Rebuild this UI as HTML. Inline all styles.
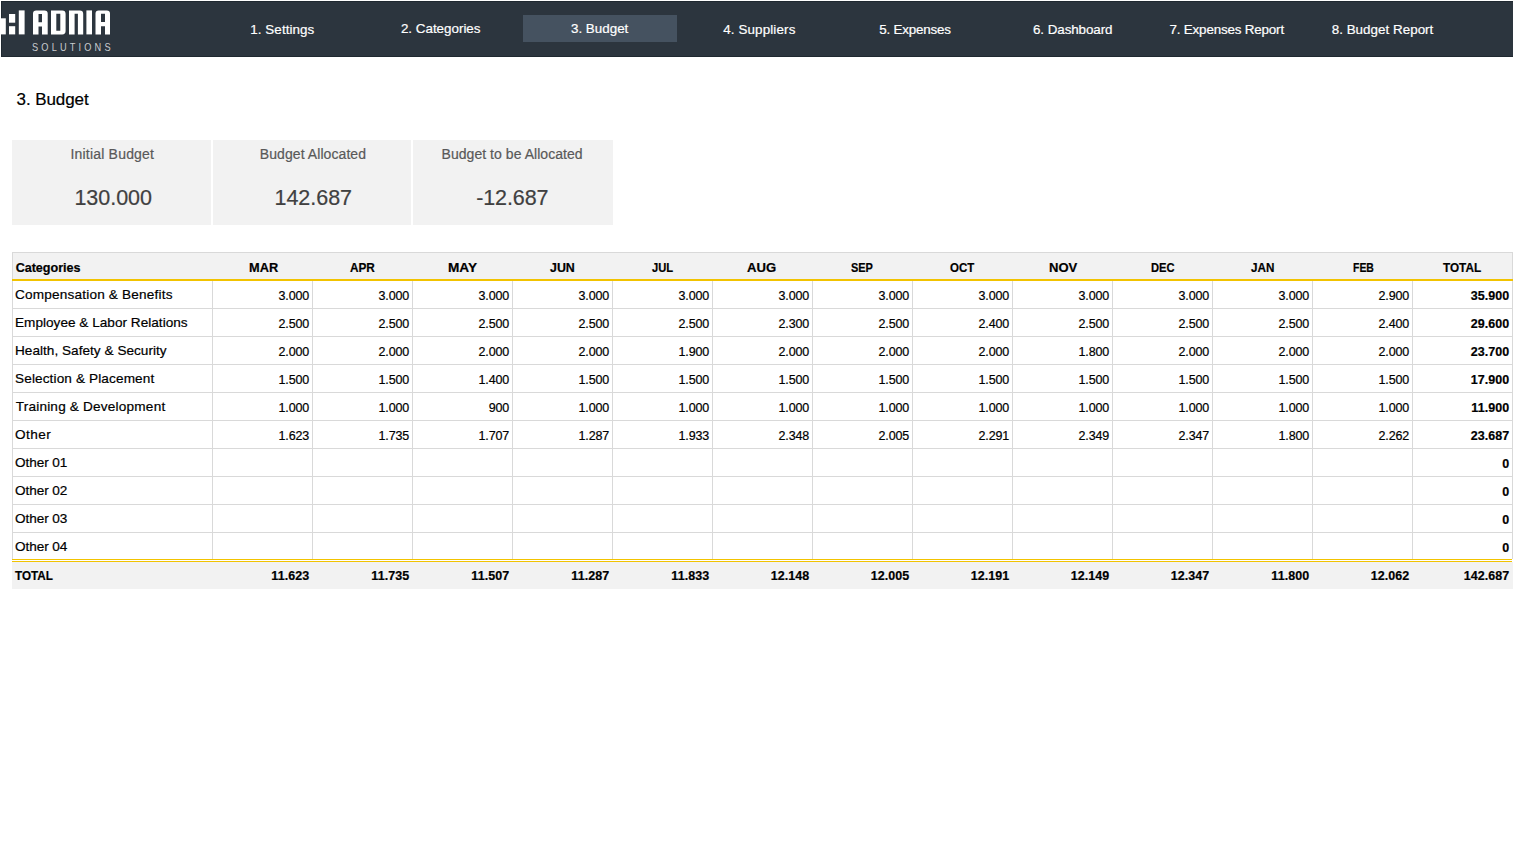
<!DOCTYPE html>
<html><head><meta charset="utf-8"><title>3. Budget</title>
<style>
html,body{margin:0;padding:0;background:#fff;}
body{width:1513px;height:841px;position:relative;overflow:hidden;font-family:"Liberation Sans",sans-serif;}
.r{position:absolute;}
.t{position:absolute;white-space:pre;line-height:1;-webkit-text-stroke:0.2px currentColor;}
</style></head><body>
<div class="r" style="left:1px;top:1px;width:1512px;height:56px;background:#2C353E;"></div>
<div class="r" style="left:1px;top:1px;width:1512px;height:1px;background:#1F2830;"></div>
<div class="r" style="left:1px;top:56px;width:1512px;height:1px;background:#1F2830;"></div>
<div class="r" style="left:1px;top:1px;width:1px;height:56px;background:#1F2830;"></div>
<div class="r" style="left:523px;top:15px;width:154px;height:27px;background:#455260;"></div>
<svg class="r" style="left:0;top:0" width="120" height="57" viewBox="0 0 120 57"><g fill="#fff">
<rect x="1" y="18.3" width="4.8" height="16.1"/>
<rect x="9" y="14" width="6.2" height="8.7"/>
<rect x="9" y="26.2" width="6.2" height="8.2"/>
<rect x="18.8" y="10.4" width="5.8" height="24"/>
<path d="M33 34.4V13.6Q33 10.4 36.2 10.4H44.5Q47.7 10.4 47.7 13.6V34.4H42V26.5H38.5V34.4Z M38.5 14V22.3H42V14Z" fill-rule="evenodd"/>
<path d="M51 10.4H62.2Q65.6 10.4 65.6 13.8V31Q65.6 34.4 62.2 34.4H51Z M56.3 13.8V30.7H60.3V13.8Z" fill-rule="evenodd"/>
<path d="M69 34.4V10.4H79.8Q83.2 10.4 83.2 13.8V34.4H77.9V13.8H74.6V34.4Z"/>
<rect x="86.4" y="10.4" width="5.6" height="24"/>
<path d="M95.5 34.4V13.6Q95.5 10.4 98.7 10.4H106.8Q110 10.4 110 13.6V34.4H105V26.3H101V34.4Z M101 13.8V22.1H105V13.8Z" fill-rule="evenodd"/>
</g></svg>
<div class="r" style="left:12px;top:140px;width:199px;height:85px;background:#F2F2F2;"></div>
<div class="r" style="left:213px;top:140px;width:198px;height:85px;background:#F2F2F2;"></div>
<div class="r" style="left:413px;top:140px;width:200px;height:85px;background:#F2F2F2;"></div>
<div class="r" style="left:12px;top:252px;width:1501px;height:1px;background:#D9D9D9;"></div>
<div class="r" style="left:13px;top:253px;width:1499px;height:26px;background:#F2F2F2;"></div>
<div class="r" style="left:12px;top:252px;width:1px;height:307px;background:#D9D9D9;"></div>
<div class="r" style="left:1512px;top:252px;width:1px;height:307px;background:#D9D9D9;"></div>
<div class="r" style="left:212px;top:281px;width:1px;height:278px;background:#D9D9D9;"></div>
<div class="r" style="left:312px;top:281px;width:1px;height:278px;background:#D9D9D9;"></div>
<div class="r" style="left:412px;top:281px;width:1px;height:278px;background:#D9D9D9;"></div>
<div class="r" style="left:512px;top:281px;width:1px;height:278px;background:#D9D9D9;"></div>
<div class="r" style="left:612px;top:281px;width:1px;height:278px;background:#D9D9D9;"></div>
<div class="r" style="left:712px;top:281px;width:1px;height:278px;background:#D9D9D9;"></div>
<div class="r" style="left:812px;top:281px;width:1px;height:278px;background:#D9D9D9;"></div>
<div class="r" style="left:912px;top:281px;width:1px;height:278px;background:#D9D9D9;"></div>
<div class="r" style="left:1012px;top:281px;width:1px;height:278px;background:#D9D9D9;"></div>
<div class="r" style="left:1112px;top:281px;width:1px;height:278px;background:#D9D9D9;"></div>
<div class="r" style="left:1212px;top:281px;width:1px;height:278px;background:#D9D9D9;"></div>
<div class="r" style="left:1312px;top:281px;width:1px;height:278px;background:#D9D9D9;"></div>
<div class="r" style="left:1412px;top:281px;width:1px;height:278px;background:#D9D9D9;"></div>
<div class="r" style="left:12px;top:308px;width:1501px;height:1px;background:#D9D9D9;"></div>
<div class="r" style="left:12px;top:336px;width:1501px;height:1px;background:#D9D9D9;"></div>
<div class="r" style="left:12px;top:364px;width:1501px;height:1px;background:#D9D9D9;"></div>
<div class="r" style="left:12px;top:392px;width:1501px;height:1px;background:#D9D9D9;"></div>
<div class="r" style="left:12px;top:420px;width:1501px;height:1px;background:#D9D9D9;"></div>
<div class="r" style="left:12px;top:448px;width:1501px;height:1px;background:#D9D9D9;"></div>
<div class="r" style="left:12px;top:476px;width:1501px;height:1px;background:#D9D9D9;"></div>
<div class="r" style="left:12px;top:504px;width:1501px;height:1px;background:#D9D9D9;"></div>
<div class="r" style="left:12px;top:532px;width:1501px;height:1px;background:#D9D9D9;"></div>
<div class="r" style="left:12px;top:279px;width:1501px;height:2px;background:#F2C300;"></div>
<div class="r" style="left:12px;top:559px;width:1500px;height:1px;background:#F2C300;"></div>
<div class="r" style="left:12px;top:561px;width:1500px;height:1px;background:#F2C300;"></div>
<div class="r" style="left:12px;top:562px;width:1501px;height:27px;background:#F2F2F2;"></div>
<div class="t" style="left:250.24px;top:22.66px;font-size:13.4px;color:#fff;font-weight:400;letter-spacing:0.077px;">1. Settings</div>
<div class="t" style="left:400.93px;top:21.66px;font-size:13.4px;color:#fff;font-weight:400;letter-spacing:-0.007px;">2. Categories</div>
<div class="t" style="left:570.93px;top:21.66px;font-size:13.4px;color:#fff;font-weight:400;letter-spacing:0.011px;">3. Budget</div>
<div class="t" style="left:723.17px;top:22.66px;font-size:13.4px;color:#fff;font-weight:400;letter-spacing:0.135px;">4. Suppliers</div>
<div class="t" style="left:879.32px;top:22.66px;font-size:13.4px;color:#fff;font-weight:400;letter-spacing:-0.210px;">5. Expenses</div>
<div class="t" style="left:1033.01px;top:22.66px;font-size:13.4px;color:#fff;font-weight:400;letter-spacing:-0.075px;">6. Dashboard</div>
<div class="t" style="left:1169.47px;top:22.66px;font-size:13.4px;color:#fff;font-weight:400;letter-spacing:-0.175px;">7. Expenses Report</div>
<div class="t" style="left:1331.70px;top:22.66px;font-size:13.4px;color:#fff;font-weight:400;letter-spacing:0.026px;">8. Budget Report</div>
<div class="t" style="left:31.78px;top:41.59px;font-size:11px;color:#C9CCCF;font-weight:400;letter-spacing:3.750px;transform:scaleX(0.84);transform-origin:0 0;-webkit-text-stroke:0;">SOLUTIONS</div>
<div class="t" style="left:16.55px;top:90.61px;font-size:17px;color:#000;font-weight:400;letter-spacing:-0.077px;">3. Budget</div>
<div class="t" style="left:70.46px;top:147.15px;font-size:14px;color:#595959;font-weight:400;letter-spacing:0.199px;">Initial Budget</div>
<div class="t" style="left:259.77px;top:147.15px;font-size:14px;color:#595959;font-weight:400;letter-spacing:0.077px;">Budget Allocated</div>
<div class="t" style="left:441.54px;top:147.15px;font-size:14px;color:#595959;font-weight:400;letter-spacing:0.047px;">Budget to be Allocated</div>
<div class="t" style="left:74.46px;top:187.50px;font-size:21.5px;color:#404040;font-weight:400;letter-spacing:-0.037px;">130.000</div>
<div class="t" style="left:274.54px;top:187.50px;font-size:21.5px;color:#404040;font-weight:400;letter-spacing:-0.038px;">142.687</div>
<div class="t" style="left:476.16px;top:187.50px;font-size:21.5px;color:#404040;font-weight:400;letter-spacing:-0.089px;">-12.687</div>
<div class="t" style="left:15.63px;top:262.33px;font-size:12.6px;color:#000;font-weight:700;letter-spacing:-0.024px;">Categories</div>
<div class="t" style="left:248.86px;top:262.33px;font-size:12.6px;color:#000;font-weight:700;transform:scaleX(1.0150);transform-origin:0 0;">MAR</div>
<div class="t" style="left:349.70px;top:262.33px;font-size:12.6px;color:#000;font-weight:700;transform:scaleX(0.9358);transform-origin:0 0;">APR</div>
<div class="t" style="left:448.32px;top:262.33px;font-size:12.6px;color:#000;font-weight:700;transform:scaleX(1.0833);transform-origin:0 0;">MAY</div>
<div class="t" style="left:550.32px;top:262.33px;font-size:12.6px;color:#000;font-weight:700;transform:scaleX(0.9854);transform-origin:0 0;">JUN</div>
<div class="t" style="left:651.78px;top:262.33px;font-size:12.6px;color:#000;font-weight:700;transform:scaleX(0.8882);transform-origin:0 0;">JUL</div>
<div class="t" style="left:747.47px;top:262.33px;font-size:12.6px;color:#000;font-weight:700;transform:scaleX(1.0412);transform-origin:0 0;">AUG</div>
<div class="t" style="left:851.47px;top:262.33px;font-size:12.6px;color:#000;font-weight:700;transform:scaleX(0.8700);transform-origin:0 0;">SEP</div>
<div class="t" style="left:950.32px;top:262.33px;font-size:12.6px;color:#000;font-weight:700;transform:scaleX(0.9118);transform-origin:0 0;">OCT</div>
<div class="t" style="left:1048.63px;top:262.33px;font-size:12.6px;color:#000;font-weight:700;transform:scaleX(1.0353);transform-origin:0 0;">NOV</div>
<div class="t" style="left:1151.24px;top:262.33px;font-size:12.6px;color:#000;font-weight:700;transform:scaleX(0.8853);transform-origin:0 0;">DEC</div>
<div class="t" style="left:1251.32px;top:262.33px;font-size:12.6px;color:#000;font-weight:700;transform:scaleX(0.9278);transform-origin:0 0;">JAN</div>
<div class="t" style="left:1352.86px;top:262.33px;font-size:12.6px;color:#000;font-weight:700;transform:scaleX(0.8291);transform-origin:0 0;">FEB</div>
<div class="t" style="left:1443.48px;top:262.33px;font-size:12.6px;color:#000;font-weight:700;transform:scaleX(0.9335);transform-origin:0 0;">TOTAL</div>
<div class="t" style="left:15.01px;top:288.49px;font-size:13.6px;color:#000;font-weight:400;letter-spacing:0.186px;">Compensation &amp; Benefits</div>
<div class="t" style="left:15.01px;top:316.49px;font-size:13.6px;color:#000;font-weight:400;letter-spacing:0.014px;">Employee &amp; Labor Relations</div>
<div class="t" style="left:15.01px;top:344.49px;font-size:13.6px;color:#000;font-weight:400;letter-spacing:0.022px;">Health, Safety &amp; Security</div>
<div class="t" style="left:15.01px;top:372.49px;font-size:13.6px;color:#000;font-weight:400;letter-spacing:0.124px;">Selection &amp; Placement</div>
<div class="t" style="left:15.71px;top:400.49px;font-size:13.6px;color:#000;font-weight:400;letter-spacing:0.197px;">Training &amp; Development</div>
<div class="t" style="left:15.01px;top:428.49px;font-size:13.6px;color:#000;font-weight:400;letter-spacing:0.461px;">Other</div>
<div class="t" style="left:15.01px;top:456.49px;font-size:13.6px;color:#000;font-weight:400;letter-spacing:-0.080px;">Other 01</div>
<div class="t" style="left:15.01px;top:484.49px;font-size:13.6px;color:#000;font-weight:400;letter-spacing:-0.080px;">Other 02</div>
<div class="t" style="left:15.01px;top:512.49px;font-size:13.6px;color:#000;font-weight:400;letter-spacing:-0.080px;">Other 03</div>
<div class="t" style="left:15.01px;top:540.49px;font-size:13.6px;color:#000;font-weight:400;letter-spacing:-0.080px;">Other 04</div>
<div class="t" style="left:15.48px;top:570.33px;font-size:12.6px;color:#000;font-weight:700;transform:scaleX(0.9273);transform-origin:0 0;">TOTAL</div>
<div class="t" style="right:1203.84px;top:290.42px;font-size:12.5px;font-weight:400;letter-spacing:-0.111px">3.000</div>
<div class="t" style="right:1103.84px;top:290.42px;font-size:12.5px;font-weight:400;letter-spacing:-0.111px">3.000</div>
<div class="t" style="right:1003.84px;top:290.42px;font-size:12.5px;font-weight:400;letter-spacing:-0.111px">3.000</div>
<div class="t" style="right:903.84px;top:290.42px;font-size:12.5px;font-weight:400;letter-spacing:-0.111px">3.000</div>
<div class="t" style="right:803.84px;top:290.42px;font-size:12.5px;font-weight:400;letter-spacing:-0.111px">3.000</div>
<div class="t" style="right:703.84px;top:290.42px;font-size:12.5px;font-weight:400;letter-spacing:-0.111px">3.000</div>
<div class="t" style="right:603.84px;top:290.42px;font-size:12.5px;font-weight:400;letter-spacing:-0.111px">3.000</div>
<div class="t" style="right:503.84px;top:290.42px;font-size:12.5px;font-weight:400;letter-spacing:-0.111px">3.000</div>
<div class="t" style="right:403.84px;top:290.42px;font-size:12.5px;font-weight:400;letter-spacing:-0.111px">3.000</div>
<div class="t" style="right:303.84px;top:290.42px;font-size:12.5px;font-weight:400;letter-spacing:-0.111px">3.000</div>
<div class="t" style="right:203.84px;top:290.42px;font-size:12.5px;font-weight:400;letter-spacing:-0.111px">3.000</div>
<div class="t" style="right:103.84px;top:290.42px;font-size:12.5px;font-weight:400;letter-spacing:-0.111px">2.900</div>
<div class="t" style="right:3.63px;top:290.42px;font-size:12.5px;font-weight:700;letter-spacing:0.079px">35.900</div>
<div class="t" style="right:1203.84px;top:318.42px;font-size:12.5px;font-weight:400;letter-spacing:-0.111px">2.500</div>
<div class="t" style="right:1103.84px;top:318.42px;font-size:12.5px;font-weight:400;letter-spacing:-0.111px">2.500</div>
<div class="t" style="right:1003.84px;top:318.42px;font-size:12.5px;font-weight:400;letter-spacing:-0.111px">2.500</div>
<div class="t" style="right:903.84px;top:318.42px;font-size:12.5px;font-weight:400;letter-spacing:-0.111px">2.500</div>
<div class="t" style="right:803.84px;top:318.42px;font-size:12.5px;font-weight:400;letter-spacing:-0.111px">2.500</div>
<div class="t" style="right:703.84px;top:318.42px;font-size:12.5px;font-weight:400;letter-spacing:-0.111px">2.300</div>
<div class="t" style="right:603.84px;top:318.42px;font-size:12.5px;font-weight:400;letter-spacing:-0.111px">2.500</div>
<div class="t" style="right:503.84px;top:318.42px;font-size:12.5px;font-weight:400;letter-spacing:-0.111px">2.400</div>
<div class="t" style="right:403.84px;top:318.42px;font-size:12.5px;font-weight:400;letter-spacing:-0.111px">2.500</div>
<div class="t" style="right:303.84px;top:318.42px;font-size:12.5px;font-weight:400;letter-spacing:-0.111px">2.500</div>
<div class="t" style="right:203.84px;top:318.42px;font-size:12.5px;font-weight:400;letter-spacing:-0.111px">2.500</div>
<div class="t" style="right:103.84px;top:318.42px;font-size:12.5px;font-weight:400;letter-spacing:-0.111px">2.400</div>
<div class="t" style="right:3.63px;top:318.42px;font-size:12.5px;font-weight:700;letter-spacing:0.079px">29.600</div>
<div class="t" style="right:1203.84px;top:346.42px;font-size:12.5px;font-weight:400;letter-spacing:-0.111px">2.000</div>
<div class="t" style="right:1103.84px;top:346.42px;font-size:12.5px;font-weight:400;letter-spacing:-0.111px">2.000</div>
<div class="t" style="right:1003.84px;top:346.42px;font-size:12.5px;font-weight:400;letter-spacing:-0.111px">2.000</div>
<div class="t" style="right:903.84px;top:346.42px;font-size:12.5px;font-weight:400;letter-spacing:-0.111px">2.000</div>
<div class="t" style="right:803.84px;top:346.42px;font-size:12.5px;font-weight:400;letter-spacing:-0.111px">1.900</div>
<div class="t" style="right:703.84px;top:346.42px;font-size:12.5px;font-weight:400;letter-spacing:-0.111px">2.000</div>
<div class="t" style="right:603.84px;top:346.42px;font-size:12.5px;font-weight:400;letter-spacing:-0.111px">2.000</div>
<div class="t" style="right:503.84px;top:346.42px;font-size:12.5px;font-weight:400;letter-spacing:-0.111px">2.000</div>
<div class="t" style="right:403.84px;top:346.42px;font-size:12.5px;font-weight:400;letter-spacing:-0.111px">1.800</div>
<div class="t" style="right:303.84px;top:346.42px;font-size:12.5px;font-weight:400;letter-spacing:-0.111px">2.000</div>
<div class="t" style="right:203.84px;top:346.42px;font-size:12.5px;font-weight:400;letter-spacing:-0.111px">2.000</div>
<div class="t" style="right:103.84px;top:346.42px;font-size:12.5px;font-weight:400;letter-spacing:-0.111px">2.000</div>
<div class="t" style="right:3.63px;top:346.42px;font-size:12.5px;font-weight:700;letter-spacing:0.079px">23.700</div>
<div class="t" style="right:1203.84px;top:374.42px;font-size:12.5px;font-weight:400;letter-spacing:-0.111px">1.500</div>
<div class="t" style="right:1103.84px;top:374.42px;font-size:12.5px;font-weight:400;letter-spacing:-0.111px">1.500</div>
<div class="t" style="right:1003.84px;top:374.42px;font-size:12.5px;font-weight:400;letter-spacing:-0.111px">1.400</div>
<div class="t" style="right:903.84px;top:374.42px;font-size:12.5px;font-weight:400;letter-spacing:-0.111px">1.500</div>
<div class="t" style="right:803.84px;top:374.42px;font-size:12.5px;font-weight:400;letter-spacing:-0.111px">1.500</div>
<div class="t" style="right:703.84px;top:374.42px;font-size:12.5px;font-weight:400;letter-spacing:-0.111px">1.500</div>
<div class="t" style="right:603.84px;top:374.42px;font-size:12.5px;font-weight:400;letter-spacing:-0.111px">1.500</div>
<div class="t" style="right:503.84px;top:374.42px;font-size:12.5px;font-weight:400;letter-spacing:-0.111px">1.500</div>
<div class="t" style="right:403.84px;top:374.42px;font-size:12.5px;font-weight:400;letter-spacing:-0.111px">1.500</div>
<div class="t" style="right:303.84px;top:374.42px;font-size:12.5px;font-weight:400;letter-spacing:-0.111px">1.500</div>
<div class="t" style="right:203.84px;top:374.42px;font-size:12.5px;font-weight:400;letter-spacing:-0.111px">1.500</div>
<div class="t" style="right:103.84px;top:374.42px;font-size:12.5px;font-weight:400;letter-spacing:-0.111px">1.500</div>
<div class="t" style="right:3.63px;top:374.42px;font-size:12.5px;font-weight:700;letter-spacing:0.079px">17.900</div>
<div class="t" style="right:1203.84px;top:402.42px;font-size:12.5px;font-weight:400;letter-spacing:-0.111px">1.000</div>
<div class="t" style="right:1103.84px;top:402.42px;font-size:12.5px;font-weight:400;letter-spacing:-0.111px">1.000</div>
<div class="t" style="right:1003.84px;top:402.42px;font-size:12.5px;font-weight:400;letter-spacing:-0.111px">900</div>
<div class="t" style="right:903.84px;top:402.42px;font-size:12.5px;font-weight:400;letter-spacing:-0.111px">1.000</div>
<div class="t" style="right:803.84px;top:402.42px;font-size:12.5px;font-weight:400;letter-spacing:-0.111px">1.000</div>
<div class="t" style="right:703.84px;top:402.42px;font-size:12.5px;font-weight:400;letter-spacing:-0.111px">1.000</div>
<div class="t" style="right:603.84px;top:402.42px;font-size:12.5px;font-weight:400;letter-spacing:-0.111px">1.000</div>
<div class="t" style="right:503.84px;top:402.42px;font-size:12.5px;font-weight:400;letter-spacing:-0.111px">1.000</div>
<div class="t" style="right:403.84px;top:402.42px;font-size:12.5px;font-weight:400;letter-spacing:-0.111px">1.000</div>
<div class="t" style="right:303.84px;top:402.42px;font-size:12.5px;font-weight:400;letter-spacing:-0.111px">1.000</div>
<div class="t" style="right:203.84px;top:402.42px;font-size:12.5px;font-weight:400;letter-spacing:-0.111px">1.000</div>
<div class="t" style="right:103.84px;top:402.42px;font-size:12.5px;font-weight:400;letter-spacing:-0.111px">1.000</div>
<div class="t" style="right:3.63px;top:402.42px;font-size:12.5px;font-weight:700;letter-spacing:0.079px">11.900</div>
<div class="t" style="right:1203.84px;top:430.42px;font-size:12.5px;font-weight:400;letter-spacing:-0.111px">1.623</div>
<div class="t" style="right:1103.84px;top:430.42px;font-size:12.5px;font-weight:400;letter-spacing:-0.111px">1.735</div>
<div class="t" style="right:1003.84px;top:430.42px;font-size:12.5px;font-weight:400;letter-spacing:-0.111px">1.707</div>
<div class="t" style="right:903.84px;top:430.42px;font-size:12.5px;font-weight:400;letter-spacing:-0.111px">1.287</div>
<div class="t" style="right:803.84px;top:430.42px;font-size:12.5px;font-weight:400;letter-spacing:-0.111px">1.933</div>
<div class="t" style="right:703.84px;top:430.42px;font-size:12.5px;font-weight:400;letter-spacing:-0.111px">2.348</div>
<div class="t" style="right:603.84px;top:430.42px;font-size:12.5px;font-weight:400;letter-spacing:-0.111px">2.005</div>
<div class="t" style="right:503.84px;top:430.42px;font-size:12.5px;font-weight:400;letter-spacing:-0.111px">2.291</div>
<div class="t" style="right:403.84px;top:430.42px;font-size:12.5px;font-weight:400;letter-spacing:-0.111px">2.349</div>
<div class="t" style="right:303.84px;top:430.42px;font-size:12.5px;font-weight:400;letter-spacing:-0.111px">2.347</div>
<div class="t" style="right:203.84px;top:430.42px;font-size:12.5px;font-weight:400;letter-spacing:-0.111px">1.800</div>
<div class="t" style="right:103.84px;top:430.42px;font-size:12.5px;font-weight:400;letter-spacing:-0.111px">2.262</div>
<div class="t" style="right:3.63px;top:430.42px;font-size:12.5px;font-weight:700;letter-spacing:0.079px">23.687</div>
<div class="t" style="right:3.63px;top:458.42px;font-size:12.5px;font-weight:700;letter-spacing:0.079px">0</div>
<div class="t" style="right:3.63px;top:486.42px;font-size:12.5px;font-weight:700;letter-spacing:0.079px">0</div>
<div class="t" style="right:3.63px;top:514.42px;font-size:12.5px;font-weight:700;letter-spacing:0.079px">0</div>
<div class="t" style="right:3.63px;top:542.42px;font-size:12.5px;font-weight:700;letter-spacing:0.079px">0</div>
<div class="t" style="right:1203.63px;top:570.42px;font-size:12.5px;font-weight:700;letter-spacing:0.079px">11.623</div>
<div class="t" style="right:1103.63px;top:570.42px;font-size:12.5px;font-weight:700;letter-spacing:0.079px">11.735</div>
<div class="t" style="right:1003.63px;top:570.42px;font-size:12.5px;font-weight:700;letter-spacing:0.079px">11.507</div>
<div class="t" style="right:903.63px;top:570.42px;font-size:12.5px;font-weight:700;letter-spacing:0.079px">11.287</div>
<div class="t" style="right:803.63px;top:570.42px;font-size:12.5px;font-weight:700;letter-spacing:0.079px">11.833</div>
<div class="t" style="right:703.63px;top:570.42px;font-size:12.5px;font-weight:700;letter-spacing:0.079px">12.148</div>
<div class="t" style="right:603.63px;top:570.42px;font-size:12.5px;font-weight:700;letter-spacing:0.079px">12.005</div>
<div class="t" style="right:503.63px;top:570.42px;font-size:12.5px;font-weight:700;letter-spacing:0.079px">12.191</div>
<div class="t" style="right:403.63px;top:570.42px;font-size:12.5px;font-weight:700;letter-spacing:0.079px">12.149</div>
<div class="t" style="right:303.63px;top:570.42px;font-size:12.5px;font-weight:700;letter-spacing:0.079px">12.347</div>
<div class="t" style="right:203.63px;top:570.42px;font-size:12.5px;font-weight:700;letter-spacing:0.079px">11.800</div>
<div class="t" style="right:103.63px;top:570.42px;font-size:12.5px;font-weight:700;letter-spacing:0.079px">12.062</div>
<div class="t" style="right:3.63px;top:570.42px;font-size:12.5px;font-weight:700;letter-spacing:0.079px">142.687</div>
</body></html>
